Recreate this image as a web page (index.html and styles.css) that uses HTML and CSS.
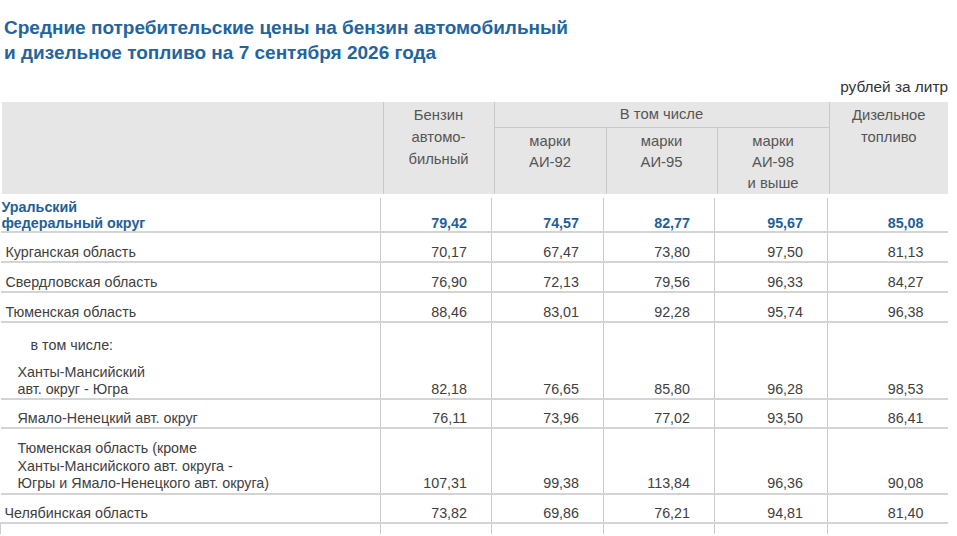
FILE: index.html
```html
<!DOCTYPE html>
<html lang="ru">
<head>
<meta charset="utf-8">
<title>Средние потребительские цены на топливо</title>
<link rel="stylesheet" href="styles.css">
</head>
<body>
<div class="page">
  <h1 class="title">Средние потребительские цены на бензин автомобильный<br>и дизельное топливо на 7 сентября 2026 года</h1>
  <div class="unit">рублей за литр</div>
  <table class="head">
    <colgroup>
      <col class="c-label-h"><col class="c1-h"><col class="c2-h"><col class="c3-h"><col class="c4-h"><col class="c5-h">
    </colgroup>
    <tr>
      <th rowspan="2" class="blank"></th>
      <th rowspan="2" class="main">Бензин<br>автомо-<br>бильный</th>
      <th colspan="3" class="group">В том числе</th>
      <th rowspan="2" class="main">Дизельное<br>топливо</th>
    </tr>
    <tr>
      <th class="sub">марки<br>АИ-92</th>
      <th class="sub">марки<br>АИ-95</th>
      <th class="sub">марки<br>АИ-98<br>и выше</th>
    </tr>
  </table>
  <table class="data">
    <colgroup>
      <col class="c-label"><col class="c1"><col class="c2"><col class="c3"><col class="c4"><col class="c5">
    </colgroup>
    <tr class="total">
      <td class="label">Уральский<br>федеральный округ</td>
      <td class="num">79,42</td><td class="num">74,57</td><td class="num">82,77</td><td class="num">95,67</td><td class="num">85,08</td>
    </tr>
    <tr>
      <td class="label">Курганская область</td>
      <td class="num">70,17</td><td class="num">67,47</td><td class="num">73,80</td><td class="num">97,50</td><td class="num">81,13</td>
    </tr>
    <tr>
      <td class="label">Свердловская область</td>
      <td class="num">76,90</td><td class="num">72,13</td><td class="num">79,56</td><td class="num">96,33</td><td class="num">84,27</td>
    </tr>
    <tr>
      <td class="label">Тюменская область</td>
      <td class="num">88,46</td><td class="num">83,01</td><td class="num">92,28</td><td class="num">95,74</td><td class="num">96,38</td>
    </tr>
    <tr class="note">
      <td class="label incl">в том числе:</td>
      <td></td><td></td><td></td><td></td><td></td>
    </tr>
    <tr class="after-note">
      <td class="label sublabel">Ханты-Мансийский<br>авт. округ - Югра</td>
      <td class="num">82,18</td><td class="num">76,65</td><td class="num">85,80</td><td class="num">96,28</td><td class="num">98,53</td>
    </tr>
    <tr class="short">
      <td class="label sublabel">Ямало-Ненецкий авт. округ</td>
      <td class="num">76,11</td><td class="num">73,96</td><td class="num">77,02</td><td class="num">93,50</td><td class="num">86,41</td>
    </tr>
    <tr class="tall">
      <td class="label sublabel">Тюменская область (кроме<br>Ханты-Мансийского авт. округа -<br>Югры и Ямало-Ненецкого авт. округа)</td>
      <td class="num">107,31</td><td class="num">99,38</td><td class="num">113,84</td><td class="num">96,36</td><td class="num">90,08</td>
    </tr>
    <tr class="short">
      <td class="label chel">Челябинская область</td>
      <td class="num">73,82</td><td class="num">69,86</td><td class="num">76,21</td><td class="num">94,81</td><td class="num">81,40</td>
    </tr>
    <tr class="tail">
      <td></td><td></td><td></td><td></td><td></td><td></td>
    </tr>
  </table>
</div>
</body>
</html>
```
FILE: styles.css
```css
html, body {
  margin: 0;
  padding: 0;
  background: #ffffff;
}

body {
  font-family: "Liberation Sans", Arial, sans-serif;
  color: #404040;
}

.page {
  width: 957px;
}

.title {
  margin: 15px 0 0 4px;
  font-size: 19px;
  line-height: 25px;
  font-weight: bold;
  color: #23649f;
}

.unit {
  margin: 13px 9px 0 0;
  text-align: right;
  font-size: 15.4px;
  line-height: 18px;
  color: #333333;
}

/* ---------- header ---------- */
.head {
  margin: 6px 0 0 2px;
  width: 946px;
  table-layout: fixed;
  border-collapse: collapse;
  background: #e6e6e6;
  font-size: 14.8px;
}

.c-label-h { width: 381px; }
.c1-h { width: 111px; }
.c2-h { width: 112px; }
.c3-h { width: 111px; }
.c4-h { width: 112px; }
.c5-h { width: 119px; }

.head th {
  font-weight: normal;
  color: #555555;
  text-align: center;
  vertical-align: top;
  padding: 0;
  border-left: 1px solid #c9c9c9;
}

.head th.blank {
  border-left: none;
}

.head th.main {
  padding-top: 2px;
  line-height: 22px;
}

.head th.group {
  height: 25px;
  line-height: 25px;
  border-bottom: 1px solid #c9c9c9;
}

.head th.sub {
  padding-top: 3px;
  line-height: 21px;
  height: 61px;
}

/* ---------- data ---------- */
.data {
  margin-top: 4px;
  width: 947px;
  table-layout: fixed;
  border-collapse: collapse;
  font-size: 14.3px;
}

.c-label { width: 380px; }
.c1 { width: 111px; }
.c2 { width: 112px; }
.c3 { width: 111px; }
.c4 { width: 113px; }
.c5 { width: 120px; }

.data td {
  padding: 11px 0 0 0;
  line-height: 17px;
  vertical-align: bottom;
  border-bottom: 2px solid #d4d4d4;
  border-left: 1px solid #cbcbcb;
}

.data td.label {
  border-left: none;
  padding-left: 5px;
}

.data td.num {
  text-align: right;
  padding-right: 24px;
}

.data tr.total td {
  padding-top: 1px;
  line-height: 16px;
  font-weight: bold;
  color: #1f5f99;
}

.data tr.total td.label {
  padding-left: 1px;
}

.data tr.note td {
  border-bottom: none;
  padding-top: 14px;
}

.data td.incl {
  padding-left: 30px;
}

.data tr.after-note td {
  padding-top: 10px;
}

.data tr.short td {
  padding-top: 10px;
}

.data td.sublabel {
  padding-left: 17px;
}

.data tr.tall td {
  line-height: 17.5px;
}

.data td.chel {
  padding-left: 4px;
}

.data tr.tail td {
  border-bottom: none;
  padding: 0;
  height: 10px;
}
```
